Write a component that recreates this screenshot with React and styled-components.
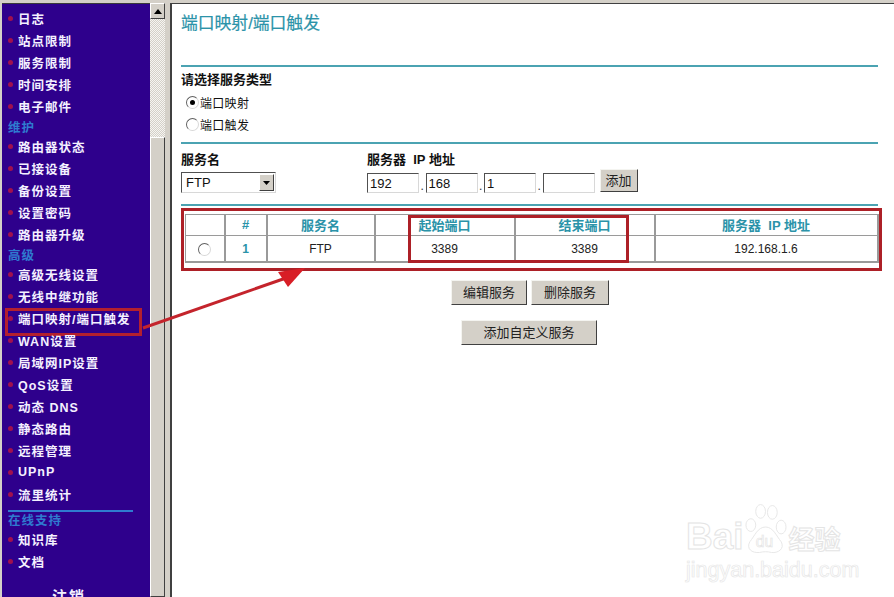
import React from 'react';
import styled, { createGlobalStyle } from 'styled-components';

const CJK = `"Liberation Sans", "Noto Sans CJK SC", sans-serif`;

const GlobalStyle = createGlobalStyle`
  html, body {
    margin: 0;
    padding: 0;
    background: #d4d0c8;
    font-family: ${CJK};
  }
`;

const menu = [
  { label: '日志' },
  { label: '站点限制' },
  { label: '服务限制' },
  { label: '时间安排' },
  { label: '电子邮件' },
  { label: '维护', section: true },
  { label: '路由器状态' },
  { label: '已接设备' },
  { label: '备份设置' },
  { label: '设置密码' },
  { label: '路由器升级' },
  { label: '高级', section: true },
  { label: '高级无线设置' },
  { label: '无线中继功能' },
  { label: '端口映射/端口触发', active: true },
  { label: 'WAN设置' },
  { label: '局域网IP设置' },
  { label: 'QoS设置' },
  { label: '动态 DNS' },
  { label: '静态路由' },
  { label: '远程管理' },
  { label: 'UPnP' },
  { label: '流里统计' },
  { label: '在线支持', section: true, divided: true },
  { label: '知识库' },
  { label: '文档' },
];

const App = () => {
  return (
    <Page>
      <GlobalStyle />
      <Sidebar>
        {menu.map(({ label, section, active, divided }) =>
          section ? (
            <React.Fragment key={label}>
              {divided && <MenuDivider />}
              <SectionTitle>{label}</SectionTitle>
            </React.Fragment>
          ) : (
            <MenuItem key={label} $active={active}>
              {label}
            </MenuItem>
          )
        )}
        <Logout>注销</Logout>
      </Sidebar>

      <Scrollbar>
        <ScrollButton>
          <svg width="8" height="5" viewBox="0 0 8 5">
            <path d="M4 0 L8 5 L0 5 Z" fill="#000" />
          </svg>
        </ScrollButton>
        <ScrollTrack />
        <ScrollThumb />
      </Scrollbar>

      <Main>
        <Title>端口映射/端口触发</Title>
        <Rule $top={31} />
        <Label $top={5}>请选择服务类型</Label>
        <RadioRow $top={6}>
          <Radio $checked />
          端口映射
        </RadioRow>
        <RadioRow $top={6}>
          <Radio />
          端口触发
        </RadioRow>
        <Rule $top={10} />

        <FormRow>
          <Field $width={186}>
            <Label>服务名</Label>
            <Select>
              FTP
              <SelectArrow>
                <svg width="7" height="4" viewBox="0 0 7 4">
                  <path d="M0 0 L7 0 L3.5 4 Z" fill="#000" />
                </svg>
              </SelectArrow>
            </Select>
          </Field>
          <Field>
            <Label>服务器&nbsp; IP 地址</Label>
            <IpRow>
              <IpInput value="192" readOnly />
              <Dot>.</Dot>
              <IpInput value="168" readOnly />
              <Dot>.</Dot>
              <IpInput value="1" readOnly />
              <Dot>.</Dot>
              <IpInput value="" readOnly />
              <AddButton>添加</AddButton>
            </IpRow>
          </Field>
        </FormRow>
        <Rule $top={11} />

        <TableFrame>
          <ServiceTable>
            <colgroup>
              <col width="39" />
              <col width="42" />
              <col width="108" />
              <col width="140" />
              <col width="140" />
              <col width="223" />
            </colgroup>
            <thead>
              <tr>
                <Th />
                <Th>#</Th>
                <Th>服务名</Th>
                <Th>起始端口</Th>
                <Th>结束端口</Th>
                <Th>服务器&nbsp; IP 地址</Th>
              </tr>
            </thead>
            <tbody>
              <tr>
                <Td>
                  <Radio />
                </Td>
                <Td $accent>1</Td>
                <Td>FTP</Td>
                <Td>3389</Td>
                <Td>3389</Td>
                <Td>192.168.1.6</Td>
              </tr>
            </tbody>
          </ServiceTable>
          <PortHighlight />
        </TableFrame>

        <ActionRow $top={9} $width={698}>
          <ActionButton $width={76}>编辑服务</ActionButton>
          <ActionButton $width={78}>删除服务</ActionButton>
        </ActionRow>
        <ActionRow $top={15} $width={696}>
          <ActionButton $width={136}>添加自定义服务</ActionButton>
        </ActionRow>

        <Watermark>
          <WatermarkBrand>
            <span>Bai</span>
            <svg width="43" height="52" viewBox="0 0 44 52">
              <g fill="none" stroke="#e2e2e2" strokeWidth="1">
                <ellipse cx="7" cy="22" rx="5" ry="6.5" />
                <ellipse cx="17" cy="8" rx="5" ry="7" />
                <ellipse cx="29" cy="9" rx="5" ry="7" />
                <ellipse cx="38" cy="24" rx="5" ry="7" />
                <path d="M22 24 C30 24 33 33 38 39 C42 46 35 51 28 50 C24 49 20 49 16 50 C8 51 2 46 6 39 C11 33 14 24 22 24 Z" />
              </g>
              <PawText x="12" y="44">
                du
              </PawText>
            </svg>
            <WatermarkCn>经验</WatermarkCn>
          </WatermarkBrand>
          <WatermarkUrl>jingyan.baidu.com</WatermarkUrl>
        </Watermark>
      </Main>

      <Arrow width="894" height="597" viewBox="0 0 894 597">
        <path d="M143 328 L286 278" stroke="#c4242c" strokeWidth="3" fill="none" />
        <path d="M305 268 L278 272 L288 287 Z" fill="#d81e26" />
      </Arrow>
    </Page>
  );
};

const Page = styled.div`
  position: relative;
  display: flex;
  width: 894px;
  height: 597px;
  padding-top: 3px;
  box-sizing: border-box;
  overflow: hidden;
  background: #d4d0c8;
`;

const Sidebar = styled.nav`
  flex: none;
  width: 148px;
  margin-left: 2px;
  padding-top: 3px;
  box-sizing: border-box;
  background: #2e008c;
  border-top: 1px solid #3a3a3a;
  overflow: hidden;
`;

const MenuItem = styled.div`
  position: relative;
  height: 22px;
  padding-left: 16px;
  display: flex;
  align-items: center;
  font-size: 12.5px;
  font-weight: 700;
  letter-spacing: 1px;
  color: #f4f0ff;
  white-space: pre;

  &::before {
    content: '';
    position: absolute;
    left: 6px;
    top: 9px;
    width: 5px;
    height: 5px;
    border-radius: 50%;
    background: #a0104e;
  }

  ${({ $active }) =>
    $active &&
    `
    &::after {
      content: '';
      position: absolute;
      left: 3px;
      top: 1px;
      width: 131px;
      height: 22px;
      border: 3px solid #b3202e;
    }
  `}
`;

const SectionTitle = styled.div`
  height: 18px;
  padding-left: 6px;
  display: flex;
  align-items: center;
  font-size: 12.5px;
  font-weight: 700;
  letter-spacing: 1px;
  color: #2f7bd0;
`;

const MenuDivider = styled.div`
  width: 125px;
  height: 2px;
  margin: 5px 0 -2px 6px;
  background: #2f7bd0;
`;

const Logout = styled.div`
  margin: 13px 0 0 50px;
  font-size: 15px;
  font-weight: 700;
  letter-spacing: 2px;
  color: #f4f0ff;
`;

const Scrollbar = styled.div`
  flex: none;
  width: 15px;
  margin-right: 5px;
  display: flex;
  flex-direction: column;
`;

const ScrollButton = styled.div`
  flex: none;
  height: 16px;
  display: flex;
  align-items: center;
  justify-content: center;
  box-sizing: border-box;
  background: #d4d0c8;
  border: 1px solid;
  border-color: #fff #404040 #404040 #fff;
`;

const ScrollTrack = styled.div`
  flex: none;
  height: 118px;
  background: conic-gradient(#f6f5f2 25%, #d4d0c8 0 50%, #f6f5f2 0 75%, #d4d0c8 0) 0 0 / 2px 2px;
`;

const ScrollThumb = styled.div`
  flex: 1;
  background: #d4d0c8;
  border: 1px solid;
  border-color: #fff #404040 #404040 #fff;
  box-sizing: border-box;
`;

const Main = styled.main`
  position: relative;
  flex: 1;
  min-width: 0;
  padding: 10px 16px 0 9px;
  background: #fff;
  border-left: 2px solid #404040;
  border-top: 1px solid #404040;
`;

const Title = styled.h1`
  margin: 0;
  height: 20px;
  line-height: 20px;
  font-size: 16.8px;
  font-weight: 400;
  color: #2b93a9;
  -webkit-text-stroke: 0.2px #2b93a9;
`;

const Rule = styled.div`
  height: 2px;
  margin-top: ${({ $top }) => $top}px;
  background: #4ba3b2;
`;

const Label = styled.div`
  margin-top: ${({ $top = 0 }) => $top}px;
  height: 16px;
  line-height: 16px;
  font-size: 13px;
  font-weight: 700;
  color: #111;
  white-space: pre;
`;

const RadioRow = styled.label`
  display: flex;
  align-items: center;
  gap: 1px;
  margin-top: ${({ $top }) => $top}px;
  padding-left: 5px;
  height: 16px;
  font-size: 12px;
  letter-spacing: 0.3px;
  color: #111;
`;

const Radio = styled.span`
  position: relative;
  display: inline-block;
  vertical-align: middle;
  width: 11px;
  height: 11px;
  border-radius: 50%;
  background: #fff;
  border: 1px solid;
  border-color: #606060 #d8d8d8 #d8d8d8 #606060;

  ${({ $checked }) =>
    $checked &&
    `
    &::after {
      content: '';
      position: absolute;
      left: 3px;
      top: 3px;
      width: 5px;
      height: 5px;
      border-radius: 50%;
      background: #000;
    }
  `}
`;

const FormRow = styled.div`
  display: flex;
  margin-top: 8px;
`;

const Field = styled.div`
  flex: none;
  width: ${({ $width }) => ($width ? `${$width}px` : 'auto')};
`;

const Select = styled.div`
  display: flex;
  align-items: center;
  justify-content: space-between;
  box-sizing: border-box;
  width: 95px;
  height: 21px;
  margin-top: 4px;
  padding: 0 1px 0 4px;
  font-size: 13px;
  color: #111;
  background: #fff;
  border: 1px solid;
  border-color: #505050 #d8d8d8 #d8d8d8 #505050;
`;

const SelectArrow = styled.span`
  display: flex;
  align-items: center;
  justify-content: center;
  box-sizing: border-box;
  width: 15px;
  height: 17px;
  background: #d4d0c8;
  border: 1px solid;
  border-color: #fff #404040 #404040 #fff;
`;

const IpRow = styled.div`
  display: flex;
  align-items: flex-end;
  height: 24px;
  margin-top: 1px;
`;

const IpInput = styled.input`
  box-sizing: border-box;
  width: 52px;
  height: 20px;
  padding: 1px 2px;
  font-family: ${CJK};
  font-size: 13px;
  color: #111;
  background: #fff;
  border: 1px solid;
  border-color: #505050 #d8d8d8 #d8d8d8 #505050;
  border-radius: 0;
  outline: none;
`;

const Dot = styled.span`
  width: 6.5px;
  text-align: center;
  font-size: 12px;
  line-height: 14px;
  color: #333;
`;

const RaisedButton = styled.button`
  box-sizing: border-box;
  padding: 0 0 2px;
  font-family: ${CJK};
  font-size: 13px;
  color: #222;
  background: #d4d0c8;
  border: 1px solid;
  border-color: #f4f4f0 #404040 #404040 #f4f4f0;
  border-radius: 0;
`;

const AddButton = styled(RaisedButton)`
  width: 38px;
  height: 23px;
  margin: 0 0 0 5px;
  align-self: flex-start;
`;

const TableFrame = styled.div`
  position: relative;
  box-sizing: border-box;
  width: 701px;
  height: 63px;
  margin-top: 2px;
  padding: 3px 0 0 1px;
  border: 3px solid #ad2027;
`;

const ServiceTable = styled.table`
  width: 692px;
  table-layout: fixed;
  border-collapse: collapse;
`;

const Th = styled.th`
  height: 21px;
  padding: 0 0 1px;
  box-sizing: border-box;
  font-size: 13px;
  font-weight: 700;
  color: #2b93a9;
  border: 1px solid #9a9a9a;
  border-width: 1px 2px 1px 1px;
  white-space: pre;
`;

const Td = styled.td`
  height: 25px;
  padding: 0;
  text-align: center;
  font-size: 12px;
  font-weight: ${({ $accent }) => ($accent ? 700 : 400)};
  color: ${({ $accent }) => ($accent ? '#2b93a9' : '#222')};
  border: 1px solid #9a9a9a;
  border-width: 1px 2px 2px 1px;
`;

const PortHighlight = styled.div`
  position: absolute;
  left: 224px;
  top: 4px;
  box-sizing: border-box;
  width: 221px;
  height: 48px;
  border: 3px solid #ad2027;
`;

const ActionRow = styled.div`
  display: flex;
  justify-content: center;
  gap: 4px;
  width: ${({ $width }) => $width}px;
  margin-top: ${({ $top }) => $top}px;
`;

const ActionButton = styled(RaisedButton)`
  width: ${({ $width }) => $width}px;
  height: 25px;
`;

const Watermark = styled.div`
  position: absolute;
  left: 514px;
  top: 499px;
  width: 170px;
  opacity: 0.8;
`;

const WatermarkBrand = styled.div`
  display: flex;
  align-items: flex-end;
  font-size: 37px;
  font-weight: 700;
  line-height: 36px;
  color: #fff;
  -webkit-text-stroke: 1px #dedede;
`;

const PawText = styled.text`
  font-family: "Liberation Sans", sans-serif;
  font-size: 16px;
  font-weight: 400;
  fill: #fff;
  stroke: #dedede;
  stroke-width: 0.7px;
`;

const WatermarkCn = styled.span`
  margin-left: 2px;
  font-size: 26px;
  line-height: 30px;
`;

const WatermarkUrl = styled.div`
  margin-top: 3px;
  font-size: 21.5px;
  line-height: 24px;
  color: #fff;
  -webkit-text-stroke: 0.7px #e2e2e2;
`;

const Arrow = styled.svg`
  position: absolute;
  left: 0;
  top: 0;
  pointer-events: none;
`;

export default App;
